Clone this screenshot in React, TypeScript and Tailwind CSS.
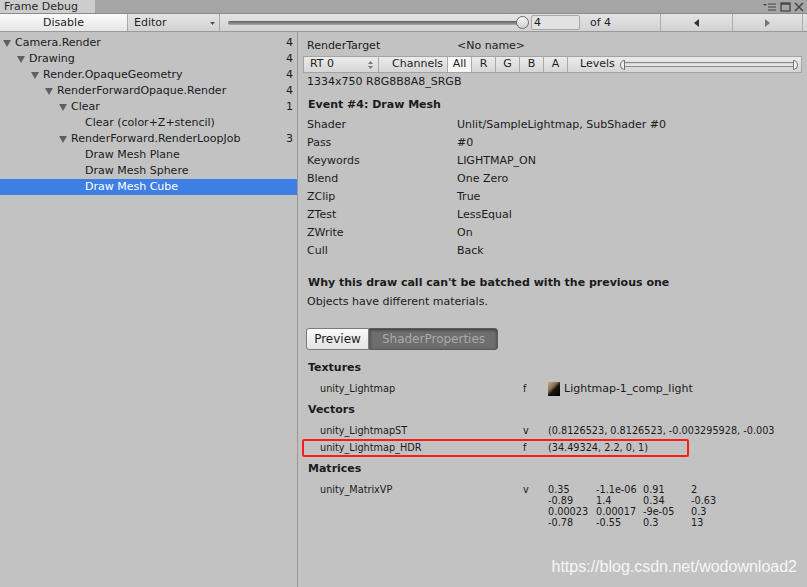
import React from 'react';

type TreeNode = { label: string; pad: string; count?: string; open: boolean; selected?: boolean };

const tree: TreeNode[] = [
  { label: 'Camera.Render', pad: 'pl-[3px]', count: '4', open: true },
  { label: 'Drawing', pad: 'pl-[17px]', count: '4', open: true },
  { label: 'Render.OpaqueGeometry', pad: 'pl-[31px]', count: '4', open: true },
  { label: 'RenderForwardOpaque.Render', pad: 'pl-[45px]', count: '4', open: true },
  { label: 'Clear', pad: 'pl-[59px]', count: '1', open: true },
  { label: 'Clear (color+Z+stencil)', pad: 'pl-[73px]', open: false },
  { label: 'RenderForward.RenderLoopJob', pad: 'pl-[59px]', count: '3', open: true },
  { label: 'Draw Mesh Plane', pad: 'pl-[73px]', open: false },
  { label: 'Draw Mesh Sphere', pad: 'pl-[73px]', open: false },
  { label: 'Draw Mesh Cube', pad: 'pl-[73px]', open: false, selected: true },
];

const props: [string, string][] = [
  ['Shader', 'Unlit/SampleLightmap, SubShader #0'],
  ['Pass', '#0'],
  ['Keywords', 'LIGHTMAP_ON'],
  ['Blend', 'One Zero'],
  ['ZClip', 'True'],
  ['ZTest', 'LessEqual'],
  ['ZWrite', 'On'],
  ['Cull', 'Back'],
];

const matrix = [
  ['0.35', '-1.1e-06', '0.91', '2'],
  ['-0.89', '1.4', '0.34', '-0.63'],
  ['0.00023', '0.00017', '-9e-05', '0.3'],
  ['-0.78', '-0.55', '0.3', '13'],
];

const Arrow = () => (
  <svg width="8" height="7" viewBox="0 0 8 7">
    <path d="M0 0H8L4 7Z" fill="#606060" />
  </svg>
);

const TitleBar = () => (
  <div className="flex h-[14px] bg-[#a5a5a5] border-b border-[#8a8a8a]">
    <div className="w-[95px] bg-[#cdcdcd] text-[11px] leading-[13px] pl-[4px] text-[#2a2a2a]">Frame Debug</div>
    <div className="flex-1" />
    <div className="flex items-center gap-[3px] pr-[3px] text-[#3a3a3a]">
      <svg width="14" height="10" viewBox="0 0 14 10">
        <path d="M0 2H4L2 4Z" fill="#444" />
        <path d="M5 2H13M5 5H13M5 8H13" stroke="#444" strokeWidth="1.2" />
      </svg>
      <svg width="11" height="10" viewBox="0 0 11 10">
        <rect x="1" y="1" width="9" height="8" fill="none" stroke="#444" strokeWidth="1.3" />
        <path d="M1 2H10" stroke="#444" strokeWidth="1.5" />
      </svg>
      <svg width="10" height="10" viewBox="0 0 10 10">
        <path d="M1 1L9 9M9 1L1 9" stroke="#444" strokeWidth="1.5" />
      </svg>
    </div>
  </div>
);

const TopToolbar = () => (
  <div className="flex h-[18px] bg-gradient-to-b from-[#e4e4e4] to-[#d2d2d2] border-b border-[#9a9a9a] text-[11px] text-[#1e1e1e]">
    <div className="w-[128px] flex items-center justify-center pt-[1px] bg-gradient-to-b from-[#fbfbfb] to-[#e6e6e6] border-r border-[#a8a8a8]">Disable</div>
    <div className="w-[92px] flex items-center pt-[1px] pl-[6px] pr-[4px] border-r border-[#a8a8a8]">
      <span className="flex-1">Editor</span>
      <svg width="5" height="3" viewBox="0 0 5 3"><path d="M0 0H5L2.5 3Z" fill="#555" /></svg>
    </div>
    <div className="w-[306px] flex items-center pl-[8px] pr-[3px]">
      <div className="relative flex-1 h-[4px] rounded-full bg-gradient-to-b from-[#5e5e5e] to-[#a8a8a8]">
        <div className="absolute right-[-6px] top-[-5px] w-[13px] h-[13px] rounded-full border border-[#6a6a6a] bg-gradient-to-b from-[#f6f6f6] to-[#cfcfcf]" />
      </div>
    </div>
    <div className="ml-[5px] my-[1px] w-[49px] bg-[#e2e2e2] border border-[#a7a7a7] rounded-[2px] pl-[2px] leading-[14px]">4</div>
    <div className="w-[80px] flex items-center pt-[1px] pl-[10px]">of 4</div>
    <div className="w-[72px] flex items-center justify-center border-l border-[#acacac]">
      <svg width="5" height="8" viewBox="0 0 5 8"><path d="M5 0V8L0 4Z" fill="#333" /></svg>
    </div>
    <div className="w-[71px] flex items-center justify-center border-l border-r border-[#acacac]">
      <svg width="5" height="8" viewBox="0 0 5 8"><path d="M0 0V8L5 4Z" fill="#777" /></svg>
    </div>
  </div>
);

const TreePane = () => (
  <div className="w-[298px] shrink-0 border-r border-[#979797] pt-[3px] text-[11px]">
    {tree.map((n) => (
      <div
        key={n.label}
        className={`flex items-center h-4 pr-[4px] ${n.pad} ${n.selected ? 'bg-[#3d7fe5] text-white' : 'text-[#1b1b1b]'}`}
      >
        <span className="w-[8px] mr-[4px] flex items-center">{n.open && <Arrow />}</span>
        <span className="flex-1 whitespace-nowrap">{n.label}</span>
        {n.count && <span>{n.count}</span>}
      </div>
    ))}
  </div>
);

const Seg = ({ children, cls }: { children: React.ReactNode; cls: string }) => (
  <div className={`flex items-center border-r border-[#a9a9a9] ${cls}`}>{children}</div>
);

const ChannelBar = () => (
  <div className="mx-[5px] mt-[1px] h-[17px] flex bg-gradient-to-b from-[#ebebeb] to-[#d6d6d6] border border-[#a3a3a3] text-[11px] text-[#1e1e1e]">
    <Seg cls="w-[75px] pl-[6px] pr-[5px]">
      <span className="flex-1">RT 0</span>
      <svg width="5" height="8" viewBox="0 0 5 8"><path d="M0 3H5L2.5 0Z M0 5H5L2.5 8Z" fill="#777" /></svg>
    </Seg>
    <Seg cls="w-[69px] justify-end pr-[4px]">Channels</Seg>
    <Seg cls="w-[24px] justify-center bg-[#f7f7f7]">All</Seg>
    <Seg cls="w-[24px] justify-center">R</Seg>
    <Seg cls="w-[24px] justify-center">G</Seg>
    <Seg cls="w-[24px] justify-center">B</Seg>
    <Seg cls="w-[24px] justify-center">A</Seg>
    <div className="flex-1 flex items-center pl-[12px] pr-[3px]">
      <span className="mr-[5px]">Levels</span>
      <div className="flex-1 h-[9px] flex items-center">
        <div className="w-[5px] h-[10px] rounded-l-full border border-[#777] bg-[#f0f0f0]" />
        <div className="flex-1 h-[5px] border-y border-[#888] bg-gradient-to-b from-[#cfcfcf] to-[#f2f2f2]" />
        <div className="w-[5px] h-[10px] rounded-r-full border border-[#777] bg-[#f0f0f0]" />
      </div>
    </div>
  </div>
);

const SmallRow = ({ name, type, children, cls = '' }: { name: string; type: string; children: React.ReactNode; cls?: string }) => (
  <div className={`flex items-center h-4 ${cls}`}>
    <span className="w-[225px] pl-[22px] text-[9.7px] whitespace-nowrap">{name}</span>
    <span className="w-[25px] text-[9.7px]">{type}</span>
    <div className="flex-1 whitespace-nowrap overflow-hidden">{children}</div>
  </div>
);

const DetailPane = () => (
  <div className="flex-1 min-w-0 pt-[5px] text-[11px] text-[#1b1b1b] relative">
    <div className="flex h-[18px] items-center pl-[9px]">
      <span className="w-[150px]">RenderTarget</span>
      <span>&lt;No name&gt;</span>
    </div>
    <ChannelBar />
    <div className="h-[18px] flex items-center pl-[9px]">1334x750 R8G8B8A8_SRGB</div>
    <div className="h-[18px] mt-[5px] flex items-center pl-[10px] font-bold">Event #4: Draw Mesh</div>
    <div className="mt-[2px]">
      {props.map(([k, v]) => (
        <div key={k} className="h-[18px] flex items-center pl-[9px]">
          <span className="w-[150px]">{k}</span>
          <span>{v}</span>
        </div>
      ))}
    </div>
    <div className="h-[18px] mt-[14px] flex items-center pl-[10px] font-bold">Why this draw call can't be batched with the previous one</div>
    <div className="h-[18px] mt-[1px] flex items-center pl-[9px]">Objects have different materials.</div>
    <div className="mt-[17px] ml-[8px] flex h-[22px] text-[12px]">
      <div className="w-[63px] flex items-center justify-center bg-gradient-to-b from-[#fafafa] to-[#e3e3e3] border border-[#7a7a7a] rounded-l-[3px]">Preview</div>
      <div className="w-[129px] flex items-center justify-center bg-[#6e6e6e] text-[#a9a9a9] border border-[#5a5a5a] rounded-r-[3px] shadow-[inset_0_1px_3px_rgba(0,0,0,0.5)]">ShaderProperties</div>
    </div>
    <div className="h-[18px] mt-[9px] flex items-center pl-[10px] font-bold">Textures</div>
    <SmallRow name="unity_Lightmap" type="f" cls="mt-[3px] h-[18px]">
      <div className="flex items-center">
        <div className="w-[12px] h-[14px] mr-[4px] bg-[linear-gradient(135deg,#bfae86_0%,#8a7552_35%,#1a140c_55%,#000_100%)]" />
        <span className="text-[11px]">Lightmap-1_comp_light</span>
      </div>
    </SmallRow>
    <div className="h-[18px] mt-[3px] flex items-center pl-[10px] font-bold">Vectors</div>
    <SmallRow name="unity_LightmapST" type="v" cls="mt-[4px]">
      <span className="text-[9.7px]">(0.8126523, 0.8126523, -0.003295928, -0.003</span>
    </SmallRow>
    <div className="relative">
      <SmallRow name="unity_Lightmap_HDR" type="f" cls="mt-[1px]">
        <span className="text-[9.7px]">(34.49324, 2.2, 0, 1)</span>
      </SmallRow>
      <div className="absolute left-[4px] top-[-1px] w-[387px] h-[18px] border-[2.5px] border-[#ff1a1a] rounded-[2px]" />
    </div>
    <div className="h-[18px] mt-[4px] flex items-center pl-[10px] font-bold">Matrices</div>
    <div className="flex mt-[6px] text-[9.7px] leading-[11px]">
      <span className="w-[225px] pl-[22px]">unity_MatrixVP</span>
      <span className="w-[25px]">v</span>
      <div className="grid grid-cols-[48px_47px_48px_48px] whitespace-nowrap">
        {matrix.flat().map((c, i) => (
          <span key={i}>{c}</span>
        ))}
      </div>
    </div>
    <div className="absolute right-[10px] bottom-[8px] font-['Liberation_Sans',Arial,sans-serif] text-[16px] text-white/85">
      https://blog.csdn.net/wodownload2
    </div>
  </div>
);

export default function App() {
  return (
    <div className="w-[807px] h-[587px] overflow-hidden flex flex-col bg-[#c2c2c2] font-['DejaVu_Sans',Verdana,sans-serif]">
      <TitleBar />
      <TopToolbar />
      <div className="flex flex-1 min-h-0">
        <TreePane />
        <DetailPane />
      </div>
    </div>
  );
}
